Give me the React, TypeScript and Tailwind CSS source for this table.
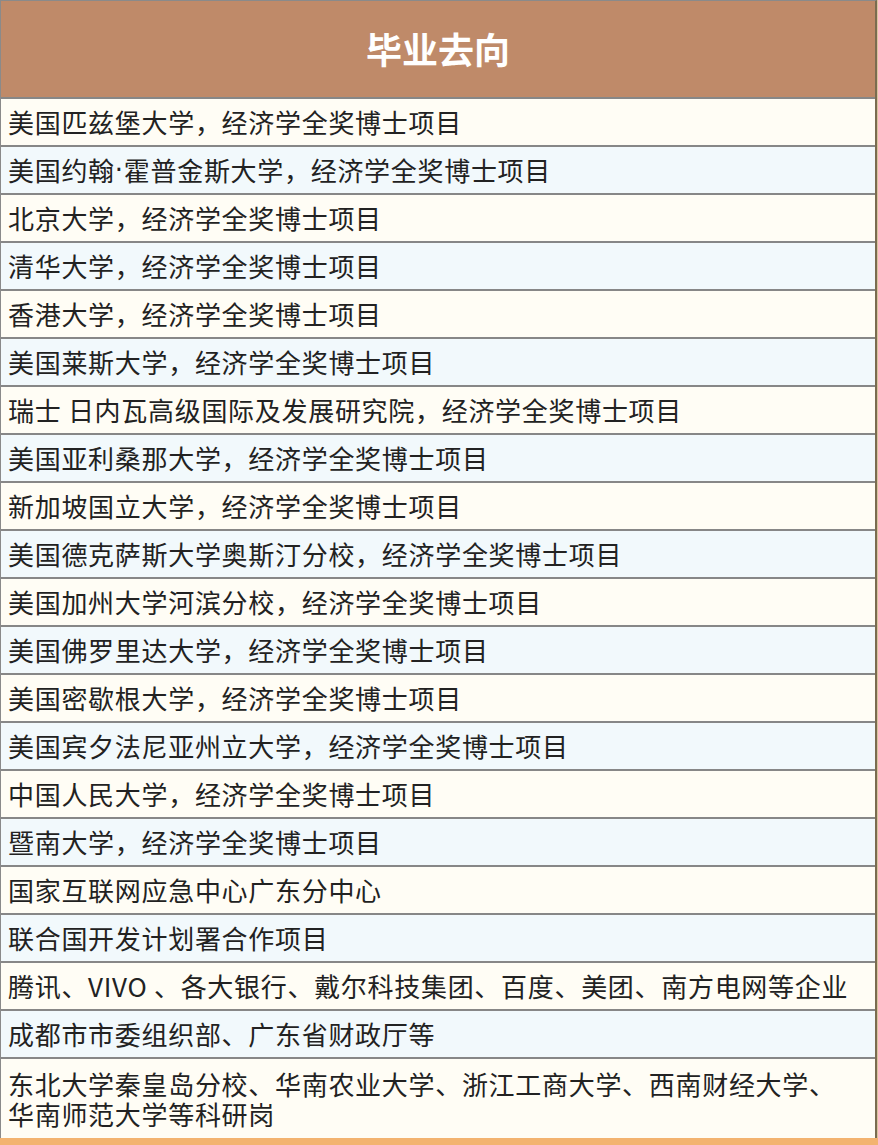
const rows: React.ReactNode[] = [
  "美国匹兹堡大学，经济学全奖博士项目",
  <>
    美国约翰<span style={{ fontFamily: '"DejaVu Sans", sans-serif' }}>·</span>霍普金斯大学，经济学全奖博士项目
  </>,
  "北京大学，经济学全奖博士项目",
  "清华大学，经济学全奖博士项目",
  "香港大学，经济学全奖博士项目",
  "美国莱斯大学，经济学全奖博士项目",
  "瑞士 日内瓦高级国际及发展研究院，经济学全奖博士项目",
  "美国亚利桑那大学，经济学全奖博士项目",
  "新加坡国立大学，经济学全奖博士项目",
  "美国德克萨斯大学奥斯汀分校，经济学全奖博士项目",
  "美国加州大学河滨分校，经济学全奖博士项目",
  "美国佛罗里达大学，经济学全奖博士项目",
  "美国密歇根大学，经济学全奖博士项目",
  "美国宾夕法尼亚州立大学，经济学全奖博士项目",
  "中国人民大学，经济学全奖博士项目",
  "暨南大学，经济学全奖博士项目",
  "国家互联网应急中心广东分中心",
  "联合国开发计划署合作项目",
  "腾讯、VIVO 、各大银行、戴尔科技集团、百度、美团、南方电网等企业",
  "成都市市委组织部、广东省财政厅等",
];

export default function App() {
  return (
    <div
      className="w-[878px] h-[1145px] flex flex-col bg-[#f3b370] text-[#222222]"
      style={{ fontFamily: '"Noto Sans CJK SC", "Noto Sans", sans-serif' }}
    >
      <div className="flex">
        <div className="w-[877px] border-t border-l border-r-2 border-t-[#8a8a8a] border-l-[#8a8a8a] border-r-[#7a6c50] flex flex-col">
          <div className="h-[96px] bg-[#bf8a69] flex items-center justify-center text-white font-bold text-[36px] pb-[2px]">
            毕业去向
          </div>
          {rows.map((text, i) => (
            <div
              key={i}
              className={`h-[48px] border-t-2 border-[#878787] flex items-center pl-[7px] text-[26px] tracking-[0.7px] leading-none whitespace-nowrap ${
                i % 2 === 0 ? "bg-[#fffdf5]" : "bg-[#f2f9fc]"
              }`}
            >
              {text}
            </div>
          ))}
          <div className="h-[81px] border-t-2 border-[#878787] bg-[#fffdf5] pl-[7px] pt-[10px] text-[26px] tracking-[0.7px] leading-[30px] whitespace-nowrap">
            <div className="leading-[30px]">东北大学秦皇岛分校、华南农业大学、浙江工商大学、西南财经大学、</div>
            <div className="leading-[26px] mt-[2px]">华南师范大学等科研岗</div>
          </div>
        </div>
        <div className="flex-1 bg-[#d9c4a0]" />
      </div>
    </div>
  );
}
